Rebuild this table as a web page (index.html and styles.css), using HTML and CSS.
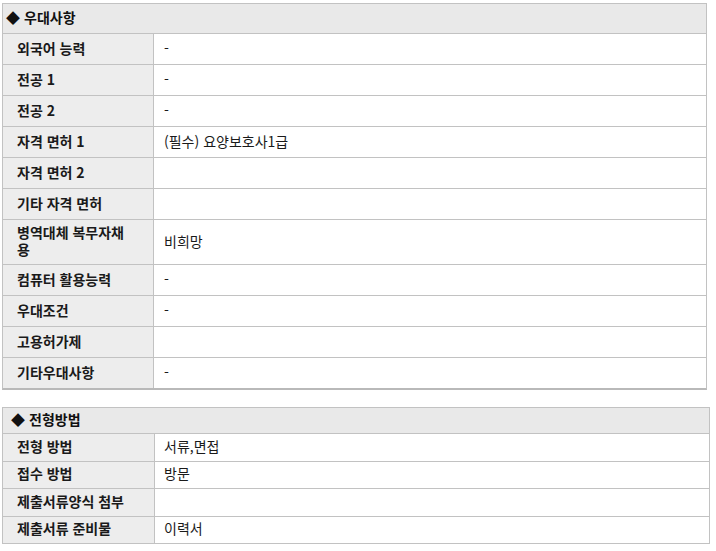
FILE: index.html
```html
<!DOCTYPE html>
<html lang="ko">
<head>
<meta charset="utf-8">
<title>우대사항</title>
<link rel="stylesheet" href="styles.css">
</head>
<body>
<div class="page">
  <section class="box box-prefer">
    <div class="box-head"><span class="mark">◆</span> 우대사항</div>
    <div class="row"><div class="label">외국어 능력</div><div class="value">-</div></div>
    <div class="row"><div class="label">전공 1</div><div class="value">-</div></div>
    <div class="row"><div class="label">전공 2</div><div class="value">-</div></div>
    <div class="row"><div class="label">자격 면허 1</div><div class="value">(필수) 요양보호사1급</div></div>
    <div class="row"><div class="label">자격 면허 2</div><div class="value"></div></div>
    <div class="row"><div class="label">기타 자격 면허</div><div class="value"></div></div>
    <div class="row"><div class="label">병역대체 복무자채용</div><div class="value">비희망</div></div>
    <div class="row"><div class="label">컴퓨터 활용능력</div><div class="value">-</div></div>
    <div class="row"><div class="label">우대조건</div><div class="value">-</div></div>
    <div class="row"><div class="label">고용허가제</div><div class="value"></div></div>
    <div class="row"><div class="label">기타우대사항</div><div class="value">-</div></div>
  </section>

  <section class="box box-select">
    <div class="box-head"><span class="mark">◆</span> 전형방법</div>
    <div class="row"><div class="label">전형 방법</div><div class="value">서류,면접</div></div>
    <div class="row"><div class="label">접수 방법</div><div class="value">방문</div></div>
    <div class="row"><div class="label">제출서류양식 첨부</div><div class="value"></div></div>
    <div class="row"><div class="label">제출서류 준비물</div><div class="value">이력서</div></div>
  </section>
</div>
</body>
</html>
```

FILE: styles.css
```css
* {
  box-sizing: border-box;
}

html, body {
  margin: 0;
  padding: 0;
  background: #ffffff;
}

body {
  font-family: "Noto Sans CJK KR", "Noto Sans", sans-serif;
  font-size: 14px;
  line-height: 17px;
  color: #1a1a1a;
}

.page {
  padding: 3px 0 0 2px;
}

.box {
  border: 1px solid #c2c2c2;
  background: #ffffff;
}

.box-prefer {
  width: 705px;
  border-bottom: 2px solid #b9b9b9;
}

.box-select {
  width: 708px;
  margin-top: 17px;
}

.box-head {
  display: flex;
  align-items: center;
  gap: 4px;
  background: #e9e9e9;
  border-bottom: 1px solid #c2c2c2;
  font-weight: bold;
  color: #111;
  padding-bottom: 2px;
}

.box-prefer .box-head {
  height: 30px;
  padding-left: 3px;
}

.box-select .box-head {
  height: 26px;
  padding-left: 8px;
}

.mark {
  font-size: 14px;
}

.row {
  display: grid;
  border-bottom: 1px solid #c2c2c2;
}

.row:last-child {
  border-bottom: 0;
}

.box-prefer .row {
  grid-template-columns: 151px 1fr;
  min-height: 31px;
}

.box-prefer .row:last-child {
  min-height: 30px;
}

.box-select .row {
  grid-template-columns: 152px 1fr;
  min-height: 27.5px;
}

.box-select .row:last-child {
  min-height: 26.5px;
}

.label {
  display: flex;
  align-items: center;
  background: #ededed;
  border-right: 1px solid #c2c2c2;
  padding: 4px 20px 6px 14px;
  font-weight: bold;
  color: #1a1a1a;
}

.box-select .label {
  padding-top: 1px;
  padding-bottom: 3px;
}

.value {
  display: flex;
  align-items: center;
  padding: 0 10px 2px;
}

.box-select .value {
  padding-left: 9px;
}
```
